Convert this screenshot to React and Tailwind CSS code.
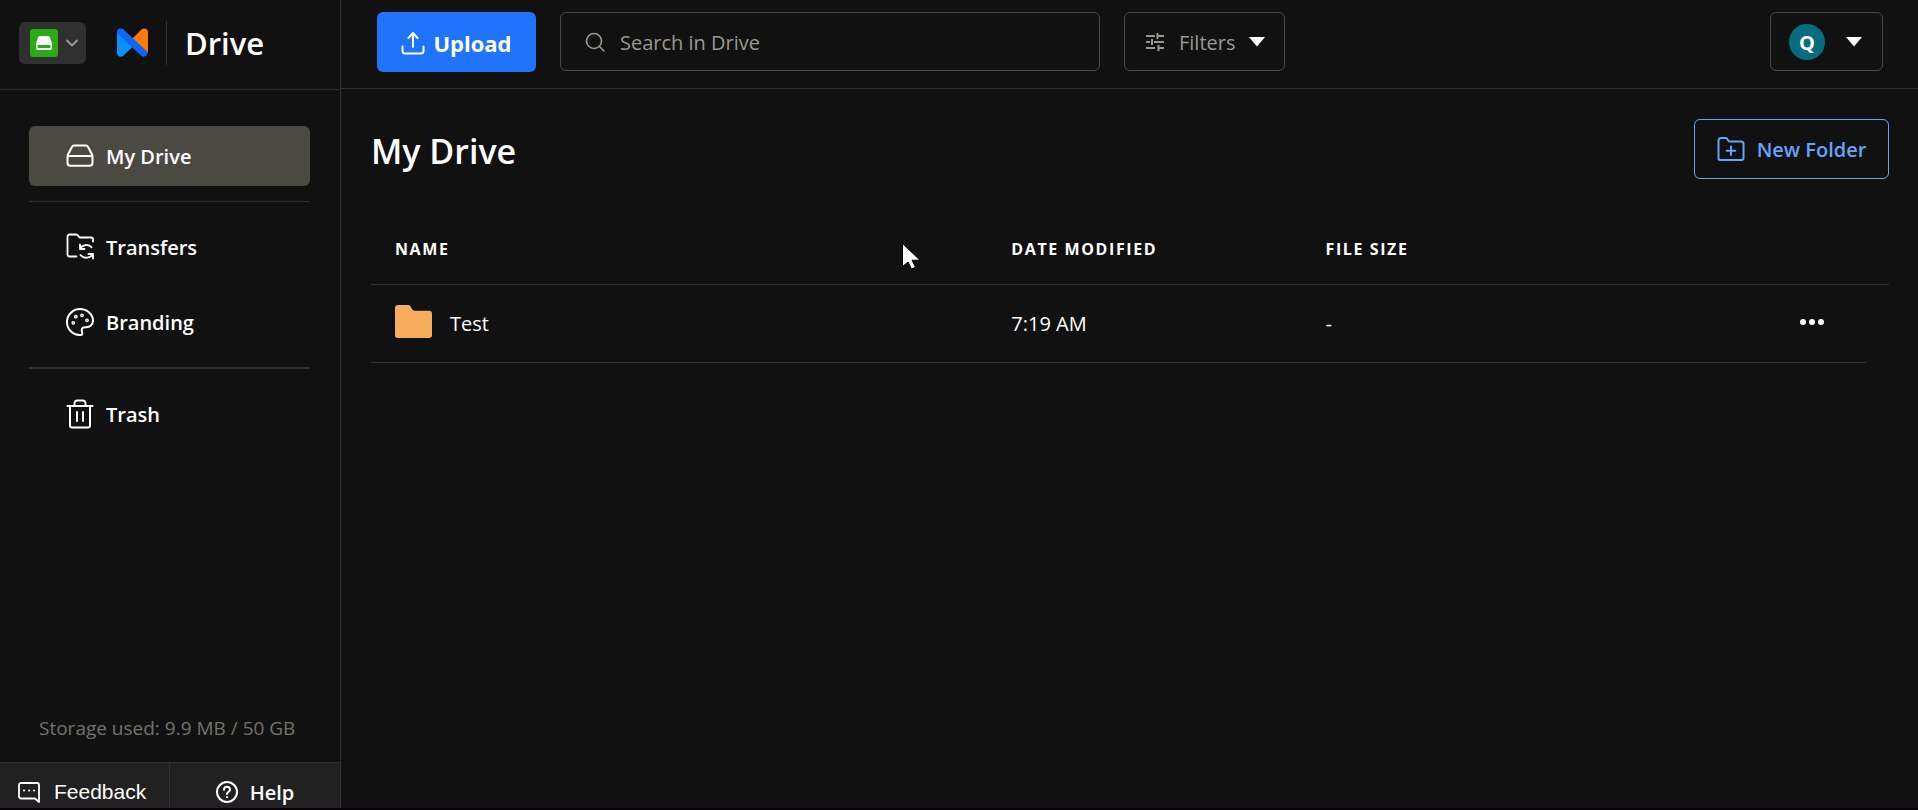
import React from 'react';

const stroke = {
  fill: 'none',
  stroke: 'currentColor',
  strokeLinecap: 'round',
  strokeLinejoin: 'round',
};

function DriveIcon() {
  return (
    <svg width="28" height="28" viewBox="0 0 28 28" {...stroke} strokeWidth="2">
      <path d="M8 3.500h12c.900 0 1.500.400 1.900 1.200l4 7.500c.4.800.6 1.500.6 2.500v6.300c0 1.800-1 2.800-2.800 2.800H4.300c-1.800 0-2.800-1-2.800-2.800v-6.300c0-1 .2-1.700.6-2.500l4-7.500c.4-.8 1-1.200 1.900-1.200z" />
      <path d="M2 14h24" />
    </svg>
  );
}

function TransfersIcon() {
  return (
    <svg width="28" height="28" viewBox="0 0 28 28" {...stroke} strokeWidth="1.8">
      <path d="M10.500 23.500H3.500a2 2 0 0 1-2-2v-18a2 2 0 0 1 2-2h6.500c1 0 1.500.4 2.200 1.300l1.300 1.700H25a2 2 0 0 1 2 2v2" />
      <path d="M14 11.500v4.500h4.500M14.500 15.500c1.500-3.600 8-5 11-1.200" />
      <path d="M27 25.500v-4.500h-4.500M26.500 21c-1.500 4-8.500 5.500-12 1" />
    </svg>
  );
}

function BrandingIcon() {
  return (
    <svg width="28" height="28" viewBox="0 0 28 28" {...stroke} strokeWidth="2">
      <path d="M15.500 27C7 27.500 1 21.500 1 14S7 1 14 1s13 5.300 13 11.500c0 4.500-3.500 6.800-7 6.700-2.500-.1-4 .6-4.200 2.300-.3 2.300 1.500 5-.3 5.500z" />
      <g strokeWidth="1.400">
        <circle cx="9.800" cy="8.700" r="1.200" />
        <circle cx="16" cy="7.300" r="1.200" />
        <circle cx="21" cy="12.300" r="1.200" />
        <circle cx="7.300" cy="14.800" r="1.200" />
      </g>
    </svg>
  );
}

function TrashIcon() {
  return (
    <svg width="28" height="30" viewBox="0 0 28 30" {...stroke} strokeWidth="2">
      <path d="M1.500 7h25M4 7v19.500a2 2 0 0 0 2 2h16a2 2 0 0 0 2-2V7M8.500 7V4.500a3 3 0 0 1 3-3h5a3 3 0 0 1 3 3V7M11 13v9M17 13v9" />
    </svg>
  );
}

function UploadIcon() {
  return (
    <svg width="24" height="24" viewBox="0 0 24 24" {...stroke} strokeWidth="2">
      <path d="M12 16V2.500M7.500 7L12 2l4.500 5M1.500 15.500v4.500a2.500 2.500 0 0 0 2.500 2.500h16a2.500 2.500 0 0 0 2.500-2.500v-4.500" />
    </svg>
  );
}

function SearchIcon() {
  return (
    <svg width="20" height="20" viewBox="0 0 20 20" {...stroke} strokeWidth="1.600">
      <circle cx="9" cy="9" r="7.500" />
      <path d="M14.500 14.500l4.500 4.500" />
    </svg>
  );
}

function FiltersIcon() {
  return (
    <svg width="20" height="20" viewBox="0 0 20 20" fill="none" stroke="currentColor" strokeWidth="2">
      <path d="M1 4h9M13 4h6M12.500 1v6M1 10h4M9 10h10M7 7v6M1 16h9M14 16h5M13.500 13v6" />
    </svg>
  );
}

function NewFolderIcon() {
  return (
    <svg width="28" height="26" viewBox="0 0 28 26" {...stroke} strokeWidth="2">
      <path d="M1.500 22.500v-18a2.500 2.500 0 0 1 2.500-2.500h5.500l2.500 3.500h12a2.500 2.500 0 0 1 2.500 2.500v14.500a1.500 1.500 0 0 1-1.500 1.500H3a1.500 1.500 0 0 1-1.500-1.500zM14 10.500v8.500M9.700 14.800h8.600" />
    </svg>
  );
}

function Caret() {
  return (
    <svg width="16" height="10" viewBox="0 0 16 10" fill="#fff">
      <path d="M0 0h16L8 9.500z" />
    </svg>
  );
}

function Logo() {
  return (
    <svg width="31" height="29" viewBox="0 0 31 29">
      <path d="M15 11L24.500 1.500C27 -.8 31 .8 31 4v21z" fill="#ff7a0a" />
      <path d="M0 4v21c0 3.500 4 5 6.500 2.500L17 17.500 8 6z" fill="#0a90fa" />
      <path d="M0 4C0 .5 4-1 6.500 1.500L30 23.500c2 3-2.500 7.500-6 4L1.200 6.500C.5 5.700 0 5 0 4z" fill="#0d66fb" />
    </svg>
  );
}

function NavItem({ icon, label, active }) {
  return (
    <a
      href="#"
      aria-current={active ? 'page' : undefined}
      className={`flex h-15 items-center gap-3 rounded-md pl-[37px] text-xl font-semibold ${active ? 'bg-[#4b4a42]' : ''}`}
    >
      <span className="flex w-7 justify-center">{icon}</span>
      <span className="pt-0.5">{label}</span>
    </a>
  );
}

function Sidebar() {
  return (
    <aside className="flex w-[341px] shrink-0 flex-col border-r border-[#303030]">
      <div className="flex h-[90px] shrink-0 items-center border-b border-[#303030] pb-1 pl-[19px]">
        <button aria-label="Switch app" className="flex h-[42px] w-[67px] items-center gap-2 rounded-md bg-[#303030] pl-[11px]">
          <svg width="28" height="28" viewBox="0 0 28 28">
            <rect width="28" height="28" rx="3" fill="#2cab17" />
            <path d="M10 7h8a2 2 0 0 1 1.800 1.200L22 14.500V19a2 2 0 0 1-2 2H8a2 2 0 0 1-2-2v-4.500l2.200-6.300A2 2 0 0 1 10 7z" fill="#fff" />
            <path d="M7.500 16h13v3h-13z" fill="#2cab17" />
          </svg>
          <svg width="12" height="8" viewBox="0 0 12 8" {...stroke} stroke="#999990" strokeWidth="2">
            <path d="M1 1.500l5 5 5-5" />
          </svg>
        </button>
        <div className="flex h-11 items-center border-r border-[#303030] pr-[18px] pl-[31px]">
          <Logo />
        </div>
        <span className="pl-[18px] text-[31px] leading-10 font-semibold">Drive</span>
      </div>

      <nav className="flex flex-col pt-9 pr-[30px] pl-[29px]">
        <NavItem icon={<DriveIcon />} label="My Drive" active />
        <hr className="my-[15px] border-[#303030]" />
        <NavItem icon={<TransfersIcon />} label="Transfers" />
        <div className="h-[15px]" />
        <NavItem icon={<BrandingIcon />} label="Branding" />
        <hr className="my-[15px] border-t-2 border-[#303030]" />
        <NavItem icon={<TrashIcon />} label="Trash" />
      </nav>

      <p className="mt-auto pb-5 pl-[39px] text-[19px] leading-7 text-[#73726c]">Storage used: 9.9 MB / 50 GB</p>
      <div className="flex h-[46px] shrink-0 border-t border-[#303030] bg-[#212121]">
        <button className="flex w-1/2 items-center gap-[14px] border-r border-[#303030] pt-3 pl-[18px] font-['Liberation_Sans',sans-serif] text-[21px]">
          <svg width="22" height="22" viewBox="0 0 22 22" {...stroke} strokeWidth="1.800">
            <path d="M3 2h16a2 2 0 0 1 2 2v17l-4-3.500H3a2 2 0 0 1-2-2V4a2 2 0 0 1 2-2z" />
            <path d="M6 9.500h.1M11 9.500h.1M16 9.500h.1" strokeWidth="2" />
          </svg>
          Feedback
        </button>
        <button className="flex w-1/2 items-center justify-center gap-3 pt-3 text-xl font-semibold">
          <svg width="22" height="22" viewBox="0 0 22 22" {...stroke} strokeWidth="2">
            <circle cx="11" cy="11" r="10" />
            <path d="M8 8.800c0-4 6-4 6 0 0 2-3 2-3 4.200M11 16v.2" />
          </svg>
          <span className="pt-0.5">Help</span>
        </button>
      </div>
    </aside>
  );
}

function TopBar() {
  return (
    <header className="flex h-[89px] shrink-0 items-start gap-6 border-b border-[#303030] pt-3 pr-[35px] pl-9">
      <button className="flex h-15 w-[159px] items-center justify-center gap-2 rounded-md bg-[#2074fb] pt-0.5 text-[22px] font-bold">
        <UploadIcon />
        Upload
      </button>
      <label className="flex h-[59px] w-[540px] items-center gap-[15px] rounded-md border border-[#4b4a42] pl-6 text-[#999990]">
        <SearchIcon />
        <input
          type="text"
          aria-label="Search in Drive"
          placeholder="Search in Drive"
          className="min-w-0 flex-1 bg-transparent pt-0.5 text-xl outline-none placeholder:text-[#999990]"
        />
      </label>
      <button className="flex h-[59px] w-[161px] items-center gap-[14px] rounded-md border border-[#4b4a42] pl-5 text-xl text-[#999990]">
        <FiltersIcon />
        <span className="pt-0.5">Filters</span>
        <Caret />
      </button>
      <button aria-label="Account" className="ml-auto flex h-[59px] w-[113px] items-center gap-[21px] rounded-md border border-[#4b4a42] pl-[18px]">
        <span className="flex size-9 items-center justify-center rounded-full bg-[#086c80] pt-0.5 text-xl font-bold">Q</span>
        <Caret />
      </button>
    </header>
  );
}

function FileTable() {
  return (
    <table className="mt-[37px] w-full table-fixed border-separate border-spacing-0 text-left">
      <colgroup>
        <col className="w-[40.6%]" />
        <col className="w-[20.7%]" />
        <col />
        <col className="w-[109px]" />
        <col className="w-[23px]" />
      </colgroup>
      <thead>
        <tr className="h-[69px] text-base tracking-widest *:border-b *:border-[#303030] *:pb-0.5 *:font-bold">
          <th className="pl-6">NAME</th>
          <th className="pl-6">DATE MODIFIED</th>
          <th className="pl-6">FILE SIZE</th>
          <th aria-label="Actions" />
          <th aria-hidden="true" />
        </tr>
      </thead>
      <tbody>
        <tr className="h-[78px] text-xl">
          <td className="border-b border-[#303030] pl-6">
            <div className="flex items-center gap-[18px]">
              <svg className="mb-1" width="37" height="33" viewBox="0 0 37 33" fill="#f8ad5d">
                <path d="M3 0h10.500c1.500 0 2.200 1.500 2.900 3 .9 2 1.800 2.700 3.600 2.700H34a3 3 0 0 1 3 3V30a3 3 0 0 1-3 3H3a3 3 0 0 1-3-3V3a3 3 0 0 1 3-3z" />
              </svg>
              <span>Test</span>
            </div>
          </td>
          <td className="border-b border-[#303030] pl-6">7:19 AM</td>
          <td className="border-b border-[#303030] pl-6">-</td>
          <td className="border-b border-[#303030] pb-1 pl-[43px]">
            <button aria-label="More options" className="block">
              <svg width="24" height="6" viewBox="0 0 24 6" fill="#fff">
                <circle cx="3" cy="3" r="3" />
                <circle cx="12" cy="3" r="3" />
                <circle cx="21" cy="3" r="3" />
              </svg>
            </button>
          </td>
          <td />
        </tr>
      </tbody>
    </table>
  );
}

export default function App() {
  return (
    <div className="relative flex h-screen overflow-hidden border-b-2 border-[#0b0007] bg-[#111111] font-['Open_Sans','Noto_Sans',sans-serif] text-white">
      <Sidebar />
      <div className="flex min-w-0 flex-1 flex-col">
        <TopBar />
        <main className="pt-[30px] pr-[29px] pl-[30px]">
          <div className="flex items-center justify-between">
            <h1 className="pt-1 text-[34px] leading-10 font-semibold">My Drive</h1>
            <button className="flex h-15 w-[195px] items-center justify-center gap-3 rounded-md border border-[#67a2fb] text-xl font-semibold text-[#67a2fb]">
              <NewFolderIcon />
              <span className="pt-0.5">New Folder</span>
            </button>
          </div>
          <FileTable />
        </main>
      </div>

      {/* mouse pointer */}
      <svg className="pointer-events-none absolute top-[242px] left-[901px]" width="20" height="28" viewBox="0 0 20 28">
        <path d="M1.500 1.500v23l5.500-4.500 3.500 7 4-1.800-3.500-7H19z" fill="#fff" stroke="#000" />
      </svg>
    </div>
  );
}
